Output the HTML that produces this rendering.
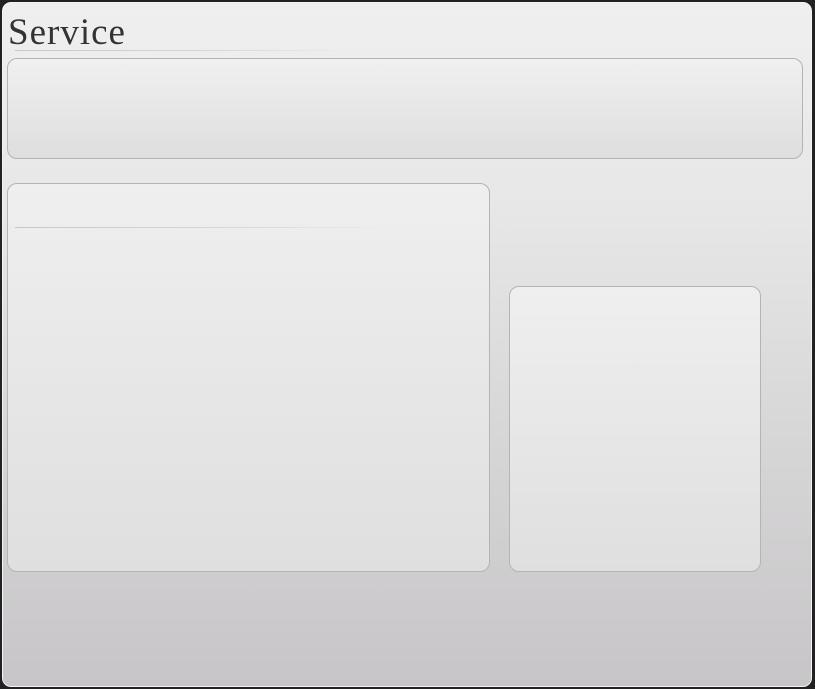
<!DOCTYPE html>
<html><head><meta charset="utf-8"><style>
html,body{margin:0;padding:0;}
body{width:815px;height:689px;background:#222;position:relative;overflow:hidden;font-family:"Liberation Serif",serif;}
.panel{position:absolute;left:2px;top:2px;width:808px;height:683px;border:1px solid #f4f4f4;border-radius:9px;background:linear-gradient(#efefef 0%,#e8e7e8 30%,#d9d8d9 60%,#c7c5c7 100%);}
.title{position:absolute;left:8px;top:11px;font-size:37px;color:#333;letter-spacing:1px;line-height:44px;}
.hl{position:absolute;height:1px;background:linear-gradient(90deg,#c8c8c8,#d8d8d8 60%,rgba(220,220,220,0));}
.box{position:absolute;border:1px solid #b4b4b4;border-radius:10px;background:linear-gradient(#efefef,#e0dfe0);box-sizing:border-box;}
</style></head><body>
<div class="panel"></div>
<div class="title">Service</div>
<div class="hl" style="left:15px;top:50px;width:340px;"></div>
<div class="box" style="left:7px;top:58px;width:796px;height:101px;background:linear-gradient(#f0f0f0,#dfdedf);"></div>
<div class="box" style="left:7px;top:183px;width:483px;height:389px;"></div>
<div class="hl" style="left:15px;top:227px;width:380px;"></div>
<div class="box" style="left:509px;top:286px;width:252px;height:286px;"></div>
</body></html>
